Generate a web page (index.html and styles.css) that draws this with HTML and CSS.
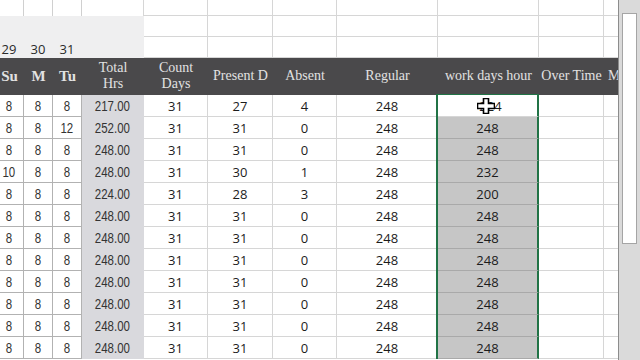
FILE: index.html
```html
<!DOCTYPE html>
<html>
<head>
<meta charset="utf-8">
<link rel="stylesheet" href="styles.css">
</head>
<body>
<div class="window">
  <div class="sheet">
    <div class="grid">
      <div class="row r0">
        <div class="c"></div><div class="c"></div><div class="c"></div><div class="c d"></div>
        <div class="c"></div><div class="c"></div><div class="c"></div><div class="c"></div><div class="c"></div><div class="c"></div><div class="c"></div>
      </div>
      <div class="row r1">
        <div class="c g"></div><div class="c g"></div><div class="c g"></div><div class="c g"></div>
        <div class="c"></div><div class="c"></div><div class="c"></div><div class="c"></div><div class="c"></div><div class="c"></div><div class="c"></div>
      </div>
      <div class="row r2">
        <div class="c g day">29</div><div class="c g day">30</div><div class="c g day">31</div><div class="c g"></div>
        <div class="c"></div><div class="c"></div><div class="c"></div><div class="c"></div><div class="c"></div><div class="c"></div><div class="c"></div>
      </div>
      <div class="row head">
        <div class="h b">Su</div><div class="h b">M</div><div class="h b">Tu</div><div class="h">Total<br>Hrs</div>
        <div class="h">Count<br>Days</div><div class="h">Present D</div><div class="h">Absent</div><div class="h">Regular</div><div class="h">work days hour</div><div class="h">Over Time</div><div class="h lft">M</div>
      </div>
      <div class="row data">
        <div class="c n"><span>8</span></div><div class="c n"><span>8</span></div><div class="c n"><span>8</span></div><div class="c t"><span>217.00</span></div>
        <div class="c v">31</div><div class="c v">27</div><div class="c v">4</div><div class="c v">248</div><div class="c v sel active"><span class="val">224</span>
          <svg class="cursor" width="18" height="16" viewBox="0 0 18 16"><path d="M6.5 0.5h5v5h6v5h-6v5h-5v-5h-6v-5h6z" fill="#fff" stroke="#000" stroke-width="1.6"/></svg>
        </div><div class="c"></div><div class="c"></div>
      </div>
      <div class="row data">
        <div class="c n"><span>8</span></div><div class="c n"><span>8</span></div><div class="c n"><span>12</span></div><div class="c t"><span>252.00</span></div>
        <div class="c v">31</div><div class="c v">31</div><div class="c v">0</div><div class="c v">248</div><div class="c v sel">248</div><div class="c"></div><div class="c"></div>
      </div>
      <div class="row data">
        <div class="c n"><span>8</span></div><div class="c n"><span>8</span></div><div class="c n"><span>8</span></div><div class="c t"><span>248.00</span></div>
        <div class="c v">31</div><div class="c v">31</div><div class="c v">0</div><div class="c v">248</div><div class="c v sel">248</div><div class="c"></div><div class="c"></div>
      </div>
      <div class="row data">
        <div class="c n"><span>10</span></div><div class="c n"><span>8</span></div><div class="c n"><span>8</span></div><div class="c t"><span>248.00</span></div>
        <div class="c v">31</div><div class="c v">30</div><div class="c v">1</div><div class="c v">248</div><div class="c v sel">232</div><div class="c"></div><div class="c"></div>
      </div>
      <div class="row data">
        <div class="c n"><span>8</span></div><div class="c n"><span>8</span></div><div class="c n"><span>8</span></div><div class="c t"><span>224.00</span></div>
        <div class="c v">31</div><div class="c v">28</div><div class="c v">3</div><div class="c v">248</div><div class="c v sel">200</div><div class="c"></div><div class="c"></div>
      </div>
      <div class="row data">
        <div class="c n"><span>8</span></div><div class="c n"><span>8</span></div><div class="c n"><span>8</span></div><div class="c t"><span>248.00</span></div>
        <div class="c v">31</div><div class="c v">31</div><div class="c v">0</div><div class="c v">248</div><div class="c v sel">248</div><div class="c"></div><div class="c"></div>
      </div>
      <div class="row data">
        <div class="c n"><span>8</span></div><div class="c n"><span>8</span></div><div class="c n"><span>8</span></div><div class="c t"><span>248.00</span></div>
        <div class="c v">31</div><div class="c v">31</div><div class="c v">0</div><div class="c v">248</div><div class="c v sel">248</div><div class="c"></div><div class="c"></div>
      </div>
      <div class="row data">
        <div class="c n"><span>8</span></div><div class="c n"><span>8</span></div><div class="c n"><span>8</span></div><div class="c t"><span>248.00</span></div>
        <div class="c v">31</div><div class="c v">31</div><div class="c v">0</div><div class="c v">248</div><div class="c v sel">248</div><div class="c"></div><div class="c"></div>
      </div>
      <div class="row data">
        <div class="c n"><span>8</span></div><div class="c n"><span>8</span></div><div class="c n"><span>8</span></div><div class="c t"><span>248.00</span></div>
        <div class="c v">31</div><div class="c v">31</div><div class="c v">0</div><div class="c v">248</div><div class="c v sel">248</div><div class="c"></div><div class="c"></div>
      </div>
      <div class="row data">
        <div class="c n"><span>8</span></div><div class="c n"><span>8</span></div><div class="c n"><span>8</span></div><div class="c t"><span>248.00</span></div>
        <div class="c v">31</div><div class="c v">31</div><div class="c v">0</div><div class="c v">248</div><div class="c v sel">248</div><div class="c"></div><div class="c"></div>
      </div>
      <div class="row data">
        <div class="c n"><span>8</span></div><div class="c n"><span>8</span></div><div class="c n"><span>8</span></div><div class="c t"><span>248.00</span></div>
        <div class="c v">31</div><div class="c v">31</div><div class="c v">0</div><div class="c v">248</div><div class="c v sel">248</div><div class="c"></div><div class="c"></div>
      </div>
      <div class="row data">
        <div class="c n"><span>8</span></div><div class="c n"><span>8</span></div><div class="c n"><span>8</span></div><div class="c t"><span>248.00</span></div>
        <div class="c v">31</div><div class="c v">31</div><div class="c v">0</div><div class="c v">248</div><div class="c v sel">248</div><div class="c"></div><div class="c"></div>
      </div>
    </div>
  </div>
  <div class="scrollbar">
    <div class="track-top"></div>
    <div class="thumb"></div>
  </div>
</div>
</body>
</html>
```
FILE: styles.css
```css
* { box-sizing: border-box; }
html, body { margin: 0; padding: 0; background: #fff; }
body { width: 640px; height: 360px; overflow: hidden; font-family: "Open Sans", sans-serif; }

.window { display: flex; width: 640px; height: 360px; }
.sheet { width: 618px; height: 360px; overflow: hidden; }
.grid { margin-left: -5px; width: 649px; }

.row {
  display: grid;
  grid-template-columns: 29px 29px 29px 62px 64px 65px 64px 101px 101px 65px 40px;
}
.r0 { height: 16px; }
.r1 { height: 21px; }
.r2 { height: 20px; }
.head { height: 38px; background: #4a494b; }
.data { height: 22px; }

.c {
  border-right: 1px solid #d6d6d6;
  border-bottom: 1px solid #d6d6d6;
  display: flex;
  align-items: center;
  justify-content: center;
  color: #1f1f1f;
  position: relative;
}
.r0 .c:nth-child(-n+4) { border-bottom: none; border-right-color: #d0d0d0; }
.r0 .c.d { border-right-color: #d6d6d6; }
.g { background: #efeff0; border-right-color: #efeff0; border-bottom-color: #efeff0; }
.r2 .c:nth-child(-n+4) { border-bottom: none; }

.day { font-family: "Open Sans", sans-serif; font-size: 13px; color: #2a2a2a; padding-top: 3px; }

.h {
  display: flex;
  align-items: center;
  justify-content: center;
  text-align: center;
  font-family: "Liberation Serif", serif;
  font-size: 14px;
  line-height: 16px;
  color: #e2e2e2;
  white-space: nowrap;
}
.h.b { font-weight: bold; font-size: 15px; }
.h.lft { justify-content: flex-start; padding-left: 4px; }

.n, .t { border-right-color: #b2b2b2; border-bottom-color: #b2b2b2; }
.n span, .t span {
  display: inline-block;
  font-family: "Liberation Sans Narrow", "Liberation Sans", sans-serif;
  font-size: 14px;
  color: #333;
  transform: scaleX(0.82);
}
.t { background: #d9d9dd; border-right-color: #d9d9dd; border-bottom-color: #d9d9dd; }

.v { font-family: "Open Sans", sans-serif; font-size: 13px; color: #1c1c1c; }
.val { padding-left: 6px; }

.sel {
  background: #c6c6c6;
  border-bottom-color: #a9a9a9;
  border-right: 2px solid #217346;
  box-shadow: -2px 0 0 #217346;
}
.sel.active {
  background: #fff;
  border-bottom-color: #d6d6d6;
  box-shadow: -2px 0 0 #217346, 0 -1px 0 #217346, -2px -1px 0 #217346;
}
.cursor { position: absolute; left: 39px; top: 3px; }

.scrollbar {
  width: 22px;
  height: 360px;
  background: #dadada;
  border-left: 1px solid #8c8c8c;
  display: flex;
  flex-direction: column;
  padding: 0 3px 0 3px;
}
.track-top { height: 13px; flex: none; }
.thumb { height: 231px; background: #fff; border: 1px solid #a5a5a5; flex: none; }
```
